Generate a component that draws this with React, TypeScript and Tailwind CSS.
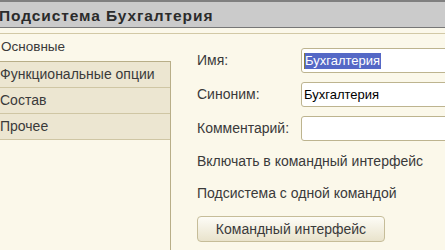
import React from 'react';

const tabs = ['Функциональные опции', 'Состав', 'Прочее'];

const App: React.FC = () => {
  return (
    <div className="w-[445px] h-[250px] overflow-hidden bg-[#fbf8ea] font-['Liberation_Sans',Arial,sans-serif] text-[14px] text-[#3a3a3a] flex flex-col">
      {/* Title bar */}
      <div className="h-[28px] shrink-0 bg-[#cbcbcb] border-t-2 border-t-[#808080] border-b border-b-[#777777] flex items-center pt-[2px]">
        <span className="-ml-[1px] font-bold text-[15.5px] tracking-[0.9px] text-[#2b2b2b] whitespace-nowrap">Подсистема Бухгалтерия</span>
      </div>
      <div className="h-[6px] shrink-0 border-b border-[#d2c9a6]" />

      <div className="flex flex-1 min-h-0">
        {/* Left tabs */}
        <div className="w-[171px] shrink-0 flex flex-col">
          <div className="h-[27px] flex items-center pl-[1px] whitespace-nowrap text-[13.5px]">Основные</div>
          <div className="flex-1 border-t border-r border-[#b8ae88]">
            {tabs.map((t) => (
              <div key={t} className="h-[26px] flex items-center bg-[#ece6d1] border-b border-[#cfc6a4] whitespace-nowrap">
                {t}
              </div>
            ))}
          </div>
        </div>

        {/* Form */}
        <div className="flex-1 pl-[26px] pt-[14px] flex flex-col whitespace-nowrap">
          <div className="flex flex-col gap-[9px]">
            <div className="flex items-center h-[25px]">
              <span className="w-[104px] shrink-0">Имя:</span>
              <div className="w-[170px] shrink-0 h-[25px] bg-white border border-[#bdb48f] rounded-[3px] flex items-center pl-[2px] text-[13px]">
                <span className="w-[1px] h-[16px] bg-[#8a7a3a]" />
                <span className="bg-[#5468c6] text-white leading-[16px] pr-[1px]">Бухгалтерия</span>
              </div>
            </div>
            <div className="flex items-center h-[25px]">
              <span className="w-[104px] shrink-0">Синоним:</span>
              <div className="w-[170px] shrink-0 h-[25px] bg-white border border-[#bdb48f] rounded-[3px] flex items-center pl-[2px] text-[13px] text-black">
                Бухгалтерия
              </div>
            </div>
            <div className="flex items-center h-[25px]">
              <span className="w-[104px] shrink-0">Комментарий:</span>
              <div className="w-[170px] shrink-0 h-[25px] bg-white border border-[#bdb48f] rounded-[3px]" />
            </div>
          </div>

          <div className="h-[25px] mt-[8px] flex items-center">Включать в командный интерфейс</div>
          <div className="h-[25px] mt-[7px] flex items-center">Подсистема с одной командой</div>

          <button className="mt-[10px] w-[188px] h-[26px] rounded-[4px] border border-[#c6bd99] bg-gradient-to-b from-[#fdfcf6] to-[#e9e3cc] text-[#3a3a3a] flex items-center justify-center">
            Командный интерфейс
          </button>
        </div>
      </div>
    </div>
  );
};

export default App;
